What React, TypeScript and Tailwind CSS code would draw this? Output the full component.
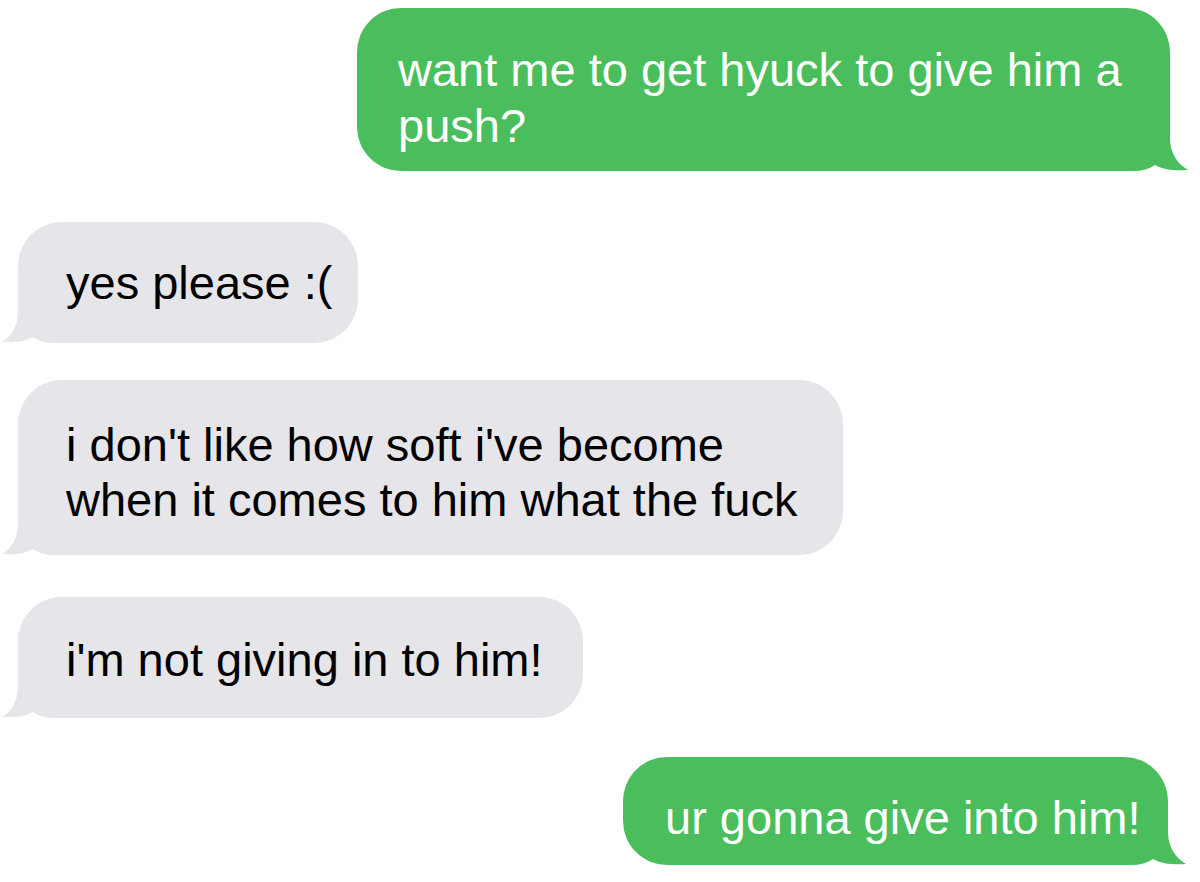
type Msg = {
  from: "me" | "them";
  lines: string[];
  width: string;
  box: string;
};

const messages: Msg[] = [
  {
    from: "me",
    lines: ["want me to get hyuck to give him a", "push?"],
    width: "w-[813px] mr-[30px] mt-[8px]",
    box: "pl-[41px] pt-[34px] pb-[17px] leading-[56px]",
  },
  {
    from: "them",
    lines: ["yes please :("],
    width: "w-[340px] mt-[51px]",
    box: "pl-[48px] pt-[33px] pb-[33px] leading-[55px]",
  },
  {
    from: "them",
    lines: ["i don't like how soft i've become", "when it comes to him what the fuck"],
    width: "w-[825px] mt-[37px]",
    box: "pl-[48px] pt-[37px] pb-[28px] leading-[55px]",
  },
  {
    from: "them",
    lines: ["i'm not giving in to him!"],
    width: "w-[565px] mt-[42px]",
    box: "pl-[48px] pt-[35px] pb-[31px] leading-[55px]",
  },
  {
    from: "me",
    lines: ["ur gonna give into him!"],
    width: "w-[545px] mr-[32px] mt-[39px]",
    box: "pl-[42px] pt-[33px] pb-[20px] leading-[55px]",
  },
];

function TailLeft() {
  return (
    <svg
      className="absolute left-[-16px] bottom-0"
      width="60"
      height="45"
      viewBox="0 0 60 45"
    >
      <path
        d="M16 0 L60 0 L60 45 L52 45 C44 45 37 43 31 39 C22 44 10 45 0 44 C10 38 16 28 16 12 Z"
        fill="#e5e5ea"
      />
    </svg>
  );
}

function TailRight() {
  return (
    <svg
      className="absolute right-[-18px] bottom-0"
      width="62"
      height="45"
      viewBox="0 0 62 45"
    >
      <path
        d="M44 0 L0 0 L0 45 L8 45 C16 45 23 43 29 39 C38 44 50 45 62 44 C52 38 44 28 44 12 Z"
        fill="#4abe5c"
      />
    </svg>
  );
}

function Bubble({ msg }: { msg: Msg }) {
  const mine = msg.from === "me";
  return (
    <div
      className={`relative rounded-[44px] text-[47px] whitespace-nowrap ${msg.width} ${msg.box} ${
        mine
          ? "self-end bg-[#4abe5c] text-white"
          : "self-start ml-[18px] bg-[#e5e5ea] text-black"
      }`}
    >
      {mine ? <TailRight /> : <TailLeft />}
      <div className="relative">
        {msg.lines.map((line) => (
          <div key={line}>{line}</div>
        ))}
      </div>
    </div>
  );
}

export default function App() {
  return (
    <div className="w-[1200px] h-[882px] bg-white overflow-hidden flex flex-col font-['Liberation_Sans',Arial,sans-serif]">
      {messages.map((m, i) => (
        <Bubble key={i} msg={m} />
      ))}
    </div>
  );
}
